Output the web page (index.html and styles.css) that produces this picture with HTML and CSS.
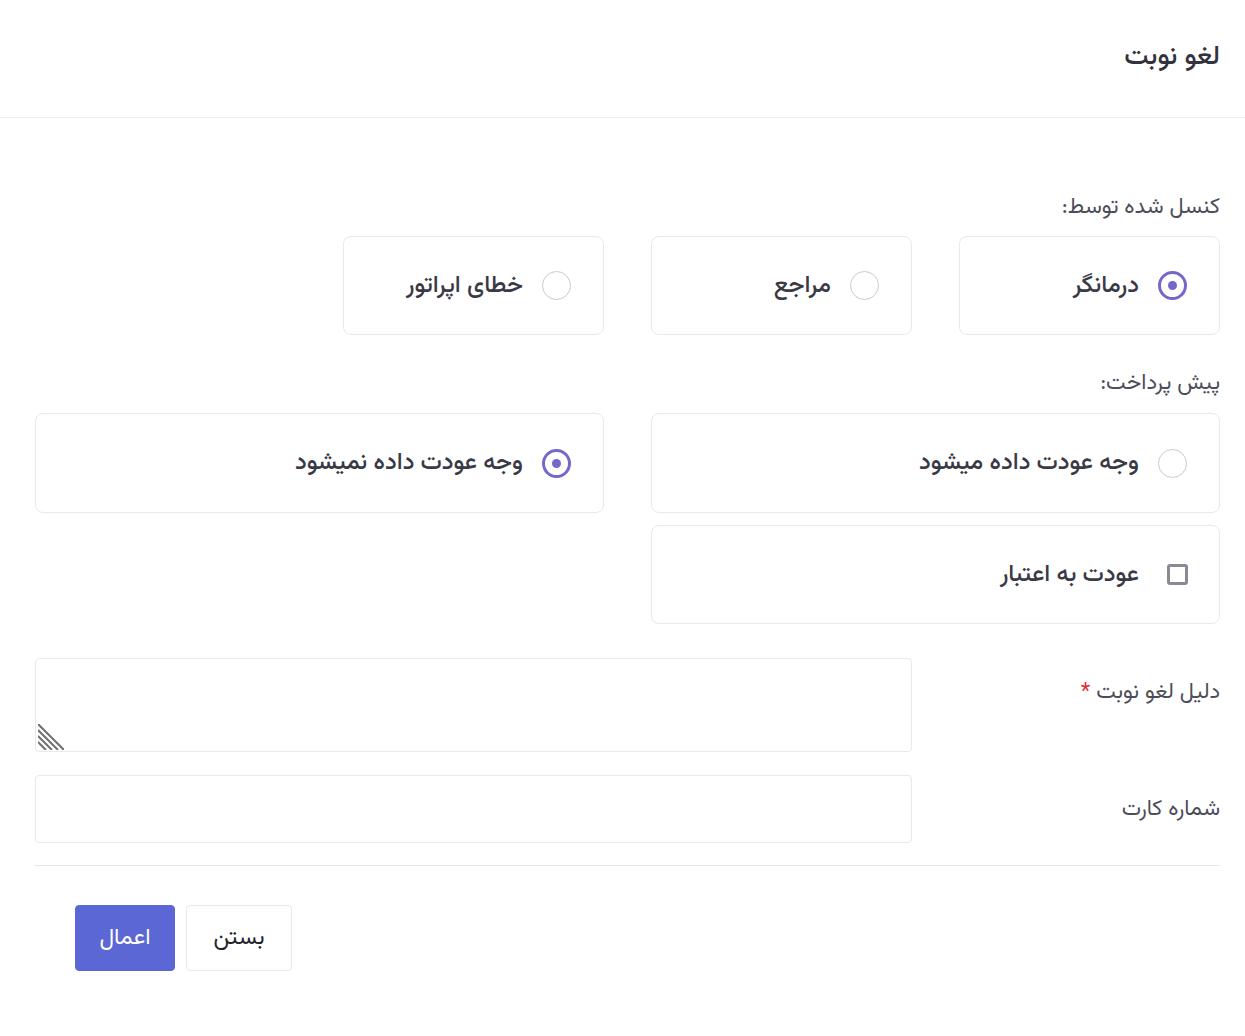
FILE: index.html
```html
<!DOCTYPE html>
<html lang="fa" dir="rtl">
<head>
<meta charset="utf-8">
<title>لغو نوبت</title>
<link rel="stylesheet" href="styles.css">
</head>
<body>
<div class="modal">
  <header class="modal-header">
    <h1 class="modal-title">لغو نوبت</h1>
  </header>
  <main class="modal-body">
    <div class="group-label first">کنسل شده توسط:</div>
    <div class="grid4">
      <label class="option">
        <span class="radio checked"></span>
        <span class="option-text">درمانگر</span>
      </label>
      <label class="option">
        <span class="radio"></span>
        <span class="option-text">مراجع</span>
      </label>
      <label class="option">
        <span class="radio"></span>
        <span class="option-text">خطای اپراتور</span>
      </label>
    </div>

    <div class="group-label second">پیش پرداخت:</div>
    <div class="grid4 rows">
      <label class="option span2 tall">
        <span class="radio"></span>
        <span class="option-text">وجه عودت داده میشود</span>
      </label>
      <label class="option span2 tall">
        <span class="radio checked"></span>
        <span class="option-text">وجه عودت داده نمیشود</span>
      </label>
      <label class="option span2">
        <span class="checkbox"></span>
        <span class="option-text">عودت به اعتبار</span>
      </label>
    </div>

    <div class="form-row first-row">
      <div class="field-label">دلیل لغو نوبت <span class="req">*</span></div>
      <div class="textarea-wrap">
        <textarea class="field textarea"></textarea>
        <svg class="grip" width="26" height="26" viewBox="0 0 26 26" aria-hidden="true">
          <g stroke="#6f6f6f" stroke-width="2" stroke-linecap="butt">
            <line x1="0" y1="0" x2="26" y2="26"/>
            <line x1="0" y1="6" x2="20" y2="26"/>
            <line x1="0" y1="12" x2="14" y2="26"/>
            <line x1="0" y1="18" x2="8" y2="26"/>
          </g>
        </svg>
      </div>
    </div>
    <div class="form-row">
      <div class="field-label">شماره کارت</div>
      <div class="input-wrap">
        <input class="field input" type="text">
      </div>
    </div>

    <hr class="divider">

    <div class="footer">
      <button class="btn btn-light">بستن</button>
      <button class="btn btn-primary">اعمال</button>
    </div>
  </main>
</div>
</body>
</html>
```

FILE: styles.css
```css
* { box-sizing: border-box; }

html, body {
  margin: 0;
  padding: 0;
  background: #ffffff;
}

body {
  font-family: "Vazirmatn", "Noto Sans Arabic", "DejaVu Sans", sans-serif;
  color: #3a3a46;
  direction: rtl;
}

.modal-header {
  height: 118px;
  border-bottom: 1px solid #ebebf0;
  display: flex;
  align-items: center;
  padding: 0 25px 2px 25px;
}

.modal-title {
  margin: 0;
  font-size: 27px;
  font-weight: 500;
  color: #33333d;
}

.modal-body {
  padding: 73px 25px 0 35px;
}

.group-label {
  font-size: 22px;
  line-height: 28px;
  color: #4d4d58;
}

.group-label.first { padding-top: 3px; margin-bottom: 14px; }
.group-label.second { padding-top: 3px; margin-top: 32px; margin-bottom: 15px; }

.grid4 {
  display: grid;
  grid-template-columns: repeat(4, 1fr);
  column-gap: 47px;
  row-gap: 12px;
}

.option {
  height: 99px;
  border: 1px solid #e8e8ef;
  border-radius: 8px;
  display: flex;
  align-items: center;
  gap: 19px;
  padding-right: 32px;
  cursor: pointer;
}

.option.tall { height: 100px; }

.span2 { grid-column: span 2; }

.option-text {
  font-size: 24px;
  line-height: 30px;
  font-weight: 500;
  color: #3a3a46;
}

.radio {
  width: 29px;
  height: 29px;
  border-radius: 50%;
  border: 1px solid #c9c9d6;
  flex: none;
  display: flex;
  align-items: center;
  justify-content: center;
}

.radio.checked {
  border: 3px solid #7468cb;
}

.radio.checked::after {
  content: "";
  width: 9px;
  height: 9px;
  border-radius: 50%;
  background: #7468cb;
}

.checkbox {
  width: 21px;
  height: 21px;
  border: 3px solid #8a8a96;
  border-radius: 3px;
  flex: none;
  margin-right: -1px;
  margin-left: 9px;
}

.form-row {
  display: grid;
  grid-template-columns: repeat(4, 1fr);
  column-gap: 47px;
  margin-top: 23px;
  align-items: start;
}

.form-row.first-row { margin-top: 34px; }

.field-label {
  font-size: 22px;
  line-height: 28px;
  padding-top: 21px;
  color: #4d4d58;
}

.req { color: #e0322d; }

.textarea-wrap, .input-wrap {
  grid-column: span 3;
  position: relative;
}

.field {
  display: block;
  width: 100%;
  border: 1px solid #e8e8ef;
  border-radius: 4px;
  background: #fff;
  font-family: inherit;
  font-size: 16px;
  outline: none;
}

.textarea {
  height: 94px;
  resize: none;
  padding: 8px 12px;
}

.grip {
  position: absolute;
  left: 3px;
  bottom: 2px;
}

.input {
  height: 68px;
  padding: 0 12px;
}

.divider {
  border: 0;
  border-top: 1px solid #e6e6ec;
  margin: 22px 0 0 0;
}

.footer {
  display: flex;
  justify-content: flex-end;
  gap: 11px;
  padding-left: 40px;
  margin-top: 39px;
}

.btn {
  height: 66px;
  border-radius: 4px;
  font-family: inherit;
  font-size: 23px;
  cursor: pointer;
}

.btn-light {
  width: 106px;
  background: #fff;
  border: 1px solid #e8e8ef;
  color: #222228;
}

.btn-primary {
  width: 100px;
  background: #5c67d6;
  border: 1px solid #5c67d6;
  color: #ffffff;
}
```
